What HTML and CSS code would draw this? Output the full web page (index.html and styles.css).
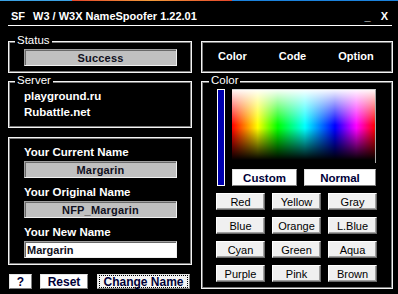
FILE: index.html
```html
<!DOCTYPE html>
<html>
<head>
<meta charset="utf-8">
<link rel="stylesheet" href="styles.css">
</head>
<body>
<div class="topline"></div>
<div class="titlebar">
  <span class="app">SF</span>
  <span class="title">W3 / W3X NameSpoofer 1.22.01</span>
  <span class="min">_</span>
  <span class="close">X</span>
</div>
<div class="main">
  <div class="col left">
    <div class="group status">
      <div class="legend">Status</div>
      <div class="field">Success</div>
    </div>
    <div class="group server">
      <div class="legend">Server</div>
      <div class="line first">playground.ru</div>
      <div class="line">Rubattle.net</div>
    </div>
    <div class="group names">
      <div class="label">Your Current Name</div>
      <div class="field">Margarin</div>
      <div class="label next">Your Original Name</div>
      <div class="field">NFP_Margarin</div>
      <div class="label next">Your New Name</div>
      <div class="input">Margarin</div>
    </div>
    <div class="actions">
      <div class="btn act q">?</div>
      <div class="btn act reset">Reset</div>
      <div class="btn act change"><span class="focus">Change Name</span></div>
    </div>
  </div>
  <div class="col right">
    <div class="group tabs">
      <span>Color</span>
      <span>Code</span>
      <span>Option</span>
    </div>
    <div class="group color">
      <div class="legend">Color</div>
      <div class="picker">
        <div class="bar"></div>
        <div class="pick-right">
          <div class="spectrum"></div>
          <div class="modes">
            <div class="btn mode custom">Custom</div>
            <div class="btn mode normal">Normal</div>
          </div>
        </div>
      </div>
      <div class="swatches">
        <div class="btn sw">Red</div>
        <div class="btn sw">Yellow</div>
        <div class="btn sw">Gray</div>
        <div class="btn sw">Blue</div>
        <div class="btn sw">Orange</div>
        <div class="btn sw">L.Blue</div>
        <div class="btn sw">Cyan</div>
        <div class="btn sw">Green</div>
        <div class="btn sw">Aqua</div>
        <div class="btn sw">Purple</div>
        <div class="btn sw">Pink</div>
        <div class="btn sw">Brown</div>
      </div>
    </div>
  </div>
</div>
</body>
</html>
```
FILE: styles.css
```css
* { box-sizing: border-box; }
html, body { margin: 0; padding: 0; }
body {
  background: #000;
  width: 398px;
  height: 294px;
  overflow: hidden;
  font-family: "Liberation Sans", Arial, sans-serif;
  font-size: 11px;
  font-weight: bold;
  color: #fff;
}
.topline {
  height: 1px;
  background: linear-gradient(to right,
    #3aa0e2 0, #3aa0e2 72px,
    #e4462a 72px, #f39a3a 150px, #e4462a 232px,
    #1b82dc 232px, #1b82dc 100%);
}
.titlebar {
  display: flex;
  margin: 0 6px 0 8px;
  height: 25px;
  padding: 9px 4px 0 3px;
  border-bottom: 1px solid #fff;
  line-height: 13px;
}
.app { width: 22px; }
.title { flex: 1; }
.min { margin-right: 10px; }

.main {
  display: flex;
  gap: 9px;
  padding: 15px 0 0 8px;
}
.col { display: flex; flex-direction: column; }
.left { width: 184px; }
.right { width: 192px; }

.group {
  border: 1px solid #f4f4f4;
  box-shadow: inset 0 0 0 1px #7a7a7a;
}
.legend {
  display: table;
  margin: -8px 0 0 6px;
  padding: 0 2px;
  background: #000;
  line-height: 13px;
  font-size: 11.5px;
  font-weight: normal;
}

.field {
  height: 17px;
  margin-left: 15px;
  width: 153px;
  background: #c0c0c0;
  border: 1px solid;
  border-color: #a0a0a0 #f0f0f0 #f0f0f0 #a0a0a0;
  box-shadow: inset 1px 1px 0 #696969;
  color: #101020;
  display: flex;
  align-items: center;
  justify-content: center;
  letter-spacing: 0.2px;
}
.status { padding-bottom: 6px; }
.status .field { margin-top: 2px; }

.server { margin-top: 8px; padding-bottom: 7px; }
.line {
  padding-left: 15px;
  line-height: 16px;
  font-size: 11.5px;
}
.line.first { margin-top: 1px; }

.names { margin-top: 9px; padding: 7px 0 6px 0; }
.label {
  padding-left: 15px;
  line-height: 14px;
  font-size: 11.5px;
}
.label.next { margin-top: 7px; }
.names .field { margin-top: 2px; }
.input {
  margin: 2px 0 0 15px;
  width: 153px;
  height: 17px;
  background: #fff;
  border: 1px solid;
  border-color: #a0a0a0 #f0f0f0 #f0f0f0 #a0a0a0;
  box-shadow: inset 1px 1px 0 #696969;
  color: #101020;
  padding-left: 2px;
  display: flex;
  align-items: center;
}

.btn {
  display: flex;
  align-items: center;
  justify-content: center;
  background: #f0f0f0;
  border: 1px solid;
  border-color: #fff #696969 #696969 #fff;
  box-shadow: inset -1px -1px 0 #a0a0a0;
  color: #000;
}

.actions {
  display: flex;
  margin-top: 9px;
  padding-left: 1px;
}
.act {
  height: 15px;
  background: #fff;
  border-color: #e6e6e6 #808080 #808080 #e6e6e6;
  box-shadow: none;
  color: #000038;
  font-size: 12px;
}
.q { width: 23px; }
.reset { width: 48px; margin-left: 8px; }
.change { width: 93px; margin-left: 9px; background: #f4f4f4; }
.focus {
  display: flex;
  align-items: center;
  justify-content: center;
  width: 87px;
  height: 11px;
  outline: 1px dotted #000;
}

.tabs {
  display: flex;
  gap: 32px;
  padding: 8px 0 9px 16px;
  line-height: 13px;
}

.color { margin-top: 8px; padding-bottom: 6px; }
.color .legend { margin-left: 7px; }
.picker {
  display: flex;
  margin-top: 2px;
  padding-left: 15px;
}
.bar {
  width: 8px;
  height: 97px;
  border: 1px solid #fff;
  background: #0000b0;
}
.pick-right {
  margin-left: 7px;
  width: 144px;
}
.spectrum {
  height: 74px;
  border-top: 1px solid #d0d0d0;
  border-right: 1px solid #a8a8a8;
  background:
    linear-gradient(to bottom, rgba(255,255,255,0.96) 0%, rgba(255,255,255,0) 48%, rgba(0,0,0,0) 52%, rgba(0,0,0,1) 96%),
    linear-gradient(to right, #f00 0%, #ff0 18%, #0f0 32%, #0ff 51%, #00f 72%, #f0f 87%, #f00 100%);
}
.modes {
  display: flex;
  gap: 7px;
  margin-top: 6px;
}
.mode {
  height: 17px;
  background: #fff;
  border-color: #e0e0e0 #808080 #808080 #e0e0e0;
  box-shadow: none;
  color: #000038;
  font-size: 11.5px;
}
.custom { width: 65px; }
.normal { width: 72px; }

.swatches {
  display: grid;
  grid-template-columns: repeat(3, 49px);
  grid-auto-rows: 17px;
  gap: 7px;
  margin: 7px 0 0 14px;
}
.sw {
  font-weight: normal;
  font-size: 11px;
}
```
